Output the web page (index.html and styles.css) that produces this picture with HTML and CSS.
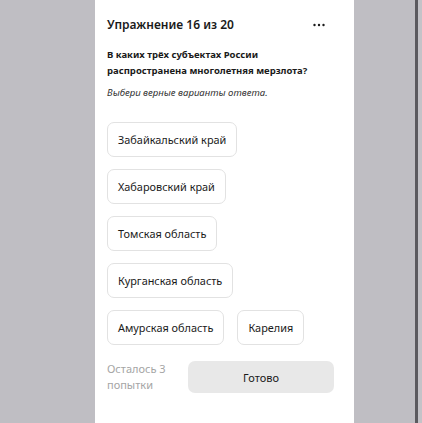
FILE: index.html
```html
<!DOCTYPE html>
<html lang="ru">
<head>
<meta charset="utf-8">
<link rel="stylesheet" href="styles.css">
</head>
<body>
<div class="screen">
  <div class="gutter-left"></div>
  <main class="panel">
    <header class="head">
      <h1 class="title">Упражнение 16 из 20</h1>
      <svg class="more" width="12" height="4" viewBox="0 0 12 4" aria-label="Ещё">
        <circle cx="1.5" cy="2" r="1.2" fill="#1a1a1a"/>
        <circle cx="6" cy="2" r="1.2" fill="#1a1a1a"/>
        <circle cx="10.5" cy="2" r="1.2" fill="#1a1a1a"/>
      </svg>
    </header>
    <p class="question">В каких трёх субъектах России распространена многолетняя мерзлота?</p>
    <p class="hint">Выбери верные варианты ответа.</p>
    <div class="options">
      <div class="row"><button class="opt">Забайкальский край</button></div>
      <div class="row"><button class="opt">Хабаровский край</button></div>
      <div class="row"><button class="opt">Томская область</button></div>
      <div class="row"><button class="opt">Курганская область</button></div>
      <div class="row"><button class="opt">Амурская область</button><button class="opt">Карелия</button></div>
    </div>
    <footer class="foot">
      <span class="tries">Осталось 3<br>попытки</span>
      <button class="done">Готово</button>
    </footer>
  </main>
  <div class="gutter-right"></div>
  <div class="edge"></div>
  <div class="edge-light"></div>
</div>
</body>
</html>
```
FILE: styles.css
```css
html, body {
  margin: 0;
  height: 100%;
  background: #bfbec3;
}
.screen {
  display: flex;
  height: 423px;
  width: 422px;
  font-family: "Noto Sans", "Open Sans", sans-serif;
  color: #1a1a1a;
}
.gutter-left { width: 95px; flex: none; }
.panel {
  width: 259px;
  flex: none;
  background: #ffffff;
  box-sizing: border-box;
  padding: 15px 20px 0 12px;
}
.gutter-right { width: 61px; flex: none; }
.edge { width: 3px; flex: none; background: #5b5a5f; }
.edge-light { flex: 1; background: #c4c3c8; }
.head {
  display: flex;
  align-items: center;
  justify-content: space-between;
  height: 20px;
}
.title {
  margin: 0;
  font-size: 12px;
  font-weight: 600;
  line-height: 20px;
}
.more {
  display: block;
  margin-right: 9px;
  margin-top: -1px;
}
.question {
  margin: 12px 0 0;
  font-size: 9.5px;
  font-weight: 700;
  line-height: 16px;
}
.hint {
  margin: 6px 0 0;
  font-size: 9.6px;
  font-style: italic;
  line-height: 16px;
  color: #333;
}
.options {
  margin-top: 21px;
  display: flex;
  flex-direction: column;
  gap: 12px;
}
.row { display: flex; gap: 13px; }
.opt {
  height: 35px;
  box-sizing: border-box;
  border: 1px solid #e2e2e2;
  border-radius: 7px;
  background: #fff;
  padding: 0 10px;
  font-family: inherit;
  font-size: 10.9px;
  color: #1a1a1a;
}
.foot {
  margin-top: 16px;
  display: flex;
  align-items: center;
}
.tries {
  width: 81px;
  font-size: 11px;
  line-height: 16px;
  color: #a5a5a5;
}
.done {
  flex: 1;
  height: 32px;
  border: none;
  border-radius: 7px;
  background: #e8e8e8;
  font-family: inherit;
  font-size: 11px;
  color: #1a1a1a;
}
```
